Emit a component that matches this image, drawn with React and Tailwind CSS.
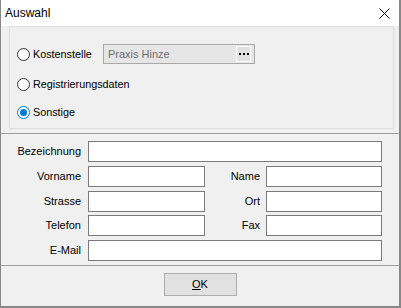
import React from "react";

const font = { fontFamily: '"Liberation Sans", Arial, sans-serif' };

const Radio = ({ checked, label }) => (
  <div className="flex items-center h-[20px]">
    <span
      className={`w-[13px] h-[13px] rounded-full border bg-white flex items-center justify-center ${
        checked ? "border-[#0078d7]" : "border-[#333333]"
      }`}
    >
      {checked && <span className="w-[7px] h-[7px] rounded-full bg-[#0078d7]" />}
    </span>
    <span className="ml-[3px] text-[10.8px] text-black">{label}</span>
  </div>
);

const Field = ({ w }) => (
  <div className={`h-[21px] bg-white border border-[#7a7a7a] ${w}`} />
);

const Label = ({ w, children }) => (
  <div className={`${w} text-right text-[11px] text-black leading-none`}>{children}</div>
);

export default function App() {
  return (
    <div
      className="w-[401px] h-[308px] bg-[#f0f0f0] border-l border-r-2 border-b-2 border-[#888888] flex flex-col"
      style={font}
    >
      {/* Title bar */}
      <div className="h-[26px] bg-white flex items-center justify-between pl-[4px] pr-[9px] shrink-0">
        <span className="text-[12px] text-black">Auswahl</span>
        <svg width="11" height="11" viewBox="0 0 11 11">
          <path d="M0.5 0.5L10.5 10.5M10.5 0.5L0.5 10.5" stroke="#000" strokeWidth="1" />
        </svg>
      </div>

      {/* Top group */}
      <div className="pl-[8px] pr-[5px] pb-[4px] shrink-0">
        <div className="h-[103px] border border-[#dcdcdc] pl-[7px] pt-[17px]">
          <div className="flex items-center h-[20px]">
            <div className="w-[86px]">
              <Radio label="Kostenstelle" />
            </div>
            <div className="w-[152px] h-[20px] bg-[#e6e6e6] border border-[#a9a9a9] flex items-center justify-between pl-[4px] pr-[3px]">
              <span className="text-[11px] text-[#6d6d6d]">Praxis Hinze</span>
              <div className="w-[15px] h-[16px] bg-[#e1e1e1] border border-white flex items-center justify-center gap-[2px]">
                <span className="w-[2px] h-[2px] bg-black" />
                <span className="w-[2px] h-[2px] bg-black" />
                <span className="w-[2px] h-[2px] bg-black" />
              </div>
            </div>
          </div>
          <div className="mt-[10px]">
            <Radio label="Registrierungsdaten" />
          </div>
          <div className="mt-[8px]">
            <Radio checked label="Sonstige" />
          </div>
        </div>
      </div>

      {/* Fields */}
      <div className="border-t border-[#a0a0a0] h-[132px] pt-[7px] flex flex-col gap-[3.75px] shrink-0">
        <div className="flex items-center">
          <Label w="w-[80px]">Bezeichnung</Label>
          <div className="ml-[7px]">
            <Field w="w-[294px]" />
          </div>
        </div>
        <div className="flex items-center">
          <Label w="w-[80px]">Vorname</Label>
          <div className="ml-[7px]">
            <Field w="w-[117px]" />
          </div>
          <Label w="w-[55px]">Name</Label>
          <div className="ml-[6px]">
            <Field w="w-[116px]" />
          </div>
        </div>
        <div className="flex items-center">
          <Label w="w-[80px]">Strasse</Label>
          <div className="ml-[7px]">
            <Field w="w-[117px]" />
          </div>
          <Label w="w-[55px]">Ort</Label>
          <div className="ml-[6px]">
            <Field w="w-[116px]" />
          </div>
        </div>
        <div className="flex items-center">
          <Label w="w-[80px]">Telefon</Label>
          <div className="ml-[7px]">
            <Field w="w-[117px]" />
          </div>
          <Label w="w-[55px]">Fax</Label>
          <div className="ml-[6px]">
            <Field w="w-[116px]" />
          </div>
        </div>
        <div className="flex items-center">
          <Label w="w-[80px]">E-Mail</Label>
          <div className="ml-[7px]">
            <Field w="w-[294px]" />
          </div>
        </div>
      </div>

      {/* Buttons */}
      <div className="flex-1 border-t border-[#a0a0a0] flex justify-center pt-[7px]">
        <button className="w-[73px] h-[23px] bg-[#e1e1e1] border border-[#adadad] text-[11px] text-black flex items-center justify-center">
          <span>
            <span className="underline">O</span>K
          </span>
        </button>
      </div>
    </div>
  );
}
